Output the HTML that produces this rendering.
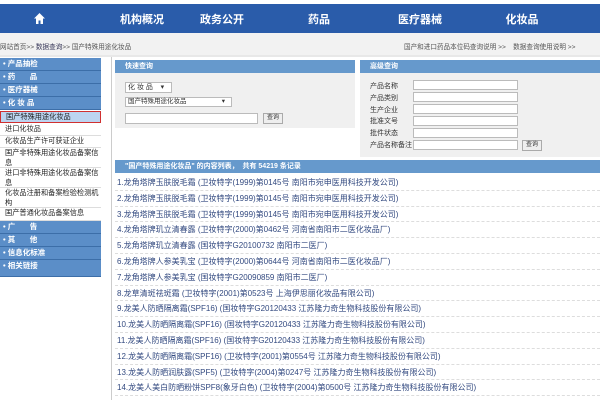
<!DOCTYPE html>
<html><head><meta charset="utf-8"><style>
*{margin:0;padding:0;box-sizing:border-box}
body{width:600px;height:400px;overflow:hidden;background:#fff;font-family:"Liberation Sans","Noto Sans CJK SC",sans-serif;font-size:7px;color:#333;position:relative}
.a{position:absolute}
.nav{left:0;top:4px;width:600px;height:29px;background:#2a5caa;color:#fff;font-size:11px;font-weight:bold}
.nav span{position:absolute;top:7px;transform:translateX(-50%)}
.bc{left:0;top:33px;width:600px;height:22px;background:#f2f2f2;color:#555;font-size:6.6px}
.sb{left:0;width:101px;height:13px;background:#5b8ec8;color:#fff;font-weight:bold;padding-left:3px;line-height:12px;border-bottom:1px solid #3c6ea8;font-size:7.5px}
.si{left:0;width:101px;background:#fff;border-bottom:1px solid #ddd;padding-left:5px;line-height:10px;color:#222;font-size:7.2px;white-space:nowrap;overflow:hidden}
.ph{height:13px;background:#6699cc;color:#fff;font-weight:bold;line-height:13px;padding-left:10px}
.inp{position:absolute;background:#fff;border:1px solid #bbb;height:10px}
.btn{position:absolute;background:#eee;border:1px solid #aaa;height:11px;font-size:6px;line-height:9px;padding:0 3px}
.row{left:115px;width:485px;height:15.8px;border-bottom:1px dashed #ddd;line-height:15px;padding-left:2px;color:#334a80;font-size:8px;white-space:nowrap;overflow:hidden}
</style></head><body>
<div class="a nav">
<svg style="position:absolute;left:34px;top:9px" width="11" height="11" viewBox="0 0 11 11"><path d="M5.5 0 L11 5.5 H9 V11 H6.5 V7.5 H4.5 V11 H2 V5.5 H0 Z" fill="#fff"/></svg>
<span style="left:142px">机构概况</span><span style="left:222px">政务公开</span><span style="left:319px">药品</span><span style="left:420px">医疗器械</span><span style="left:522px">化妆品</span></div>
<div class="a bc"><span class="a" style="left:0;top:8px">网站首页&gt;&gt; <span style="color:#335">数据查询</span>&gt;&gt; 国产特殊用途化妆品</span>
<span class="a" style="left:404px;top:8px">国产和进口药品本位码查询说明 &gt;&gt;&nbsp;&nbsp;&nbsp; 数据查询使用说明 &gt;&gt;</span></div>
<div class="a" style="left:0;top:55px;width:600px;height:2px;background:#e8e8e8"></div>
<div class="a" style="left:111px;top:57px;width:1px;height:343px;background:#ccc"></div>

<div class="a sb" style="top:58px">• 产品抽检</div>
<div class="a sb" style="top:71px">• 药&nbsp;&nbsp;&nbsp;&nbsp;&nbsp;&nbsp;&nbsp;品</div>
<div class="a sb" style="top:84px">• 医疗器械</div>
<div class="a sb" style="top:97px">• 化 妆 品</div>
<div class="a si" style="top:111px;height:12px;background:#bcd4f0;border:1px solid #d03030">国产特殊用途化妆品</div>
<div class="a si" style="top:123px;height:13px;line-height:12px">进口化妆品</div>
<div class="a si" style="top:136px;height:12px">化妆品生产许可获证企业</div>
<div class="a si" style="top:148px;height:20px">国产非特殊用途化妆品备案信<br>息</div>
<div class="a si" style="top:168px;height:20px">进口非特殊用途化妆品备案信<br>息</div>
<div class="a si" style="top:188px;height:20px">化妆品注册和备案检验检测机<br>构</div>
<div class="a si" style="top:208px;height:13px">国产普通化妆品备案信息</div>
<div class="a sb" style="top:221px">• 广&nbsp;&nbsp;&nbsp;&nbsp;&nbsp;&nbsp;&nbsp;告</div>
<div class="a sb" style="top:234px">• 其&nbsp;&nbsp;&nbsp;&nbsp;&nbsp;&nbsp;&nbsp;他</div>
<div class="a sb" style="top:247px">• 信息化标准</div>
<div class="a sb" style="top:260px;height:17px">• 相关链接</div>

<div class="a" style="left:115px;top:60px;width:240px;height:68px;background:#f0f0f0">
<div class="ph">快速查询</div>
<div class="inp" style="left:10px;top:22px;width:47px;height:11px;font-size:7px;line-height:9px;padding-left:2px">化 妆 品 &nbsp;&nbsp;&nbsp;▾</div>
<div class="inp" style="left:10px;top:37px;width:107px;font-size:6.5px;line-height:8px;padding-left:2px">国产特殊用途化妆品<span style="position:absolute;right:6px">▾</span></div>
<div class="inp" style="left:10px;top:53px;width:133px;height:11px"></div>
<div class="btn" style="left:148px;top:53px">查询</div>
</div>
<div class="a" style="left:360px;top:60px;width:240px;height:97px;background:#f0f0f0">
<div class="ph">高级查询</div>
<div class="a" style="left:10px;top:21px;line-height:11.8px;font-size:7px">产品名称<br>产品类别<br>生产企业<br>批准文号<br>批件状态<br>产品名称备注</div>
<div class="inp" style="left:53px;top:20px;width:105px"></div>
<div class="inp" style="left:53px;top:32px;width:105px"></div>
<div class="inp" style="left:53px;top:44px;width:105px"></div>
<div class="inp" style="left:53px;top:56px;width:105px"></div>
<div class="inp" style="left:53px;top:68px;width:105px"></div>
<div class="inp" style="left:53px;top:80px;width:105px"></div>
<div class="btn" style="left:162px;top:80px">查询</div>
</div>
<div class="a ph" style="left:115px;top:160px;width:485px;font-size:7px">"国产特殊用途化妆品" 的内容列表， &nbsp;共有 54219 条记录</div>

<div class="a row" style="top:175px">1.龙角塔牌玉肤脱毛霜 (卫妆特字(1999)第0145号 南阳市宛申医用科技开发公司)</div>
<div class="a row" style="top:190.8px">2.龙角塔牌玉肤脱毛霜 (卫妆特字(1999)第0145号 南阳市宛申医用科技开发公司)</div>
<div class="a row" style="top:206.6px">3.龙角塔牌玉肤脱毛霜 (卫妆特字(1999)第0145号 南阳市宛申医用科技开发公司)</div>
<div class="a row" style="top:222.4px">4.龙角塔牌玑立清春露 (卫妆特字(2000)第0462号 河南省南阳市二医化妆品厂)</div>
<div class="a row" style="top:238.2px">5.龙角塔牌玑立清春露 (国妆特字G20100732 南阳市二医厂)</div>
<div class="a row" style="top:254px">6.龙角塔牌人参美乳宝 (卫妆特字(2000)第0644号 河南省南阳市二医化妆品厂)</div>
<div class="a row" style="top:269.8px">7.龙角塔牌人参美乳宝 (国妆特字G20090859 南阳市二医厂)</div>
<div class="a row" style="top:285.6px">8.龙草清斑祛斑霜 (卫妆特字(2001)第0523号 上海伊思丽化妆品有限公司)</div>
<div class="a row" style="top:301.4px">9.龙美人防晒隔离霜(SPF16) (国妆特字G20120433 江苏隆力奇生物科技股份有限公司)</div>
<div class="a row" style="top:317.2px">10.龙美人防晒隔离霜(SPF16) (国妆特字G20120433 江苏隆力奇生物科技股份有限公司)</div>
<div class="a row" style="top:333px">11.龙美人防晒隔离霜(SPF16) (国妆特字G20120433 江苏隆力奇生物科技股份有限公司)</div>
<div class="a row" style="top:348.8px">12.龙美人防晒隔离霜(SPF16) (卫妆特字(2001)第0554号 江苏隆力奇生物科技股份有限公司)</div>
<div class="a row" style="top:364.6px">13.龙美人防晒润肤露(SPF5) (卫妆特字(2004)第0247号 江苏隆力奇生物科技股份有限公司)</div>
<div class="a row" style="top:380.4px">14.龙美人美白防晒粉饼SPF8(象牙白色) (卫妆特字(2004)第0500号 江苏隆力奇生物科技股份有限公司)</div>
</body></html>
